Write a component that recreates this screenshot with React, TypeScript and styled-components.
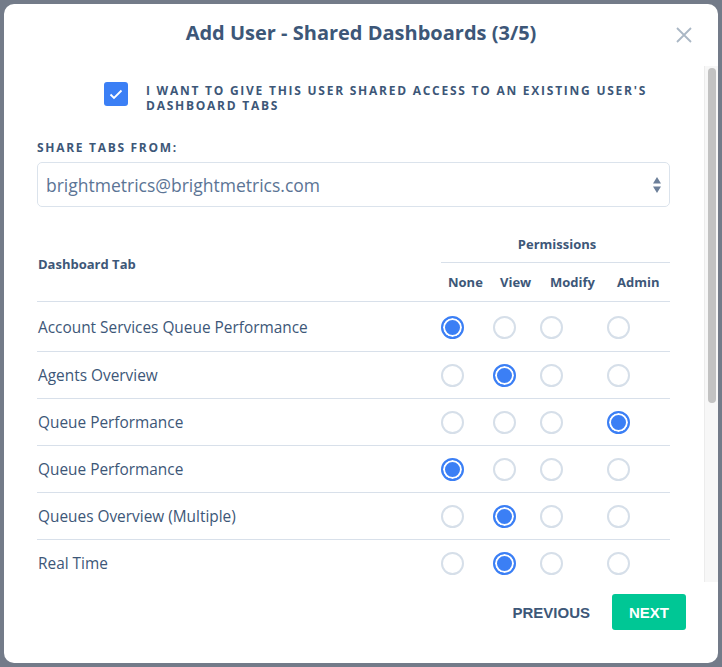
import React, { useState } from 'react';
import styled, { createGlobalStyle } from 'styled-components';

const GlobalStyle = createGlobalStyle`
    html, body {
        margin: 0;
        padding: 0;
        height: 100%;
    }
    body {
        font-family: "Open Sans", "Liberation Sans", sans-serif;
        color: #3d5778;
    }
`

const Backdrop = styled.div`
    position: fixed;
    inset: 0;
    display: flex;
    padding: 4px;
    background: #737b89;
`

const Modal = styled.div`
    flex: 1;
    display: flex;
    flex-direction: column;
    background: #ffffff;
    border-radius: 10px;
    overflow: hidden;
`

const Header = styled.div`
    height: 62px;
    flex-shrink: 0;
    display: grid;
    grid-template-columns: 1fr auto 1fr;
    align-items: center;
`

const Title = styled.h2`
    grid-column: 2;
    margin: 0;
    font-size: 20px;
    font-weight: 700;
    color: #3d5778;
    padding-bottom: 5px;
`

const CloseButton = styled.button`
    justify-self: end;
    margin-right: 26px;
    padding: 0;
    border: none;
    background: none;
    display: flex;
    cursor: pointer;
`

const Body = styled.div`
    flex: 1;
    min-height: 0;
    display: flex;
`

const ScrollContent = styled.div`
    flex: 1;
    overflow: hidden;
    padding: 0 34px 20px 33px;
`

const ScrollTrack = styled.div`
    width: 14px;
    flex-shrink: 0;
    box-sizing: border-box;
    background: #f7f7f7;
    border-left: 1px solid #ececec;
    padding: 2px 2px 0 3px;
`

const ScrollThumb = styled.div`
    height: 335px;
    border-radius: 5px;
    background: #c2c2c2;
`

const CheckRow = styled.label`
    display: flex;
    gap: 18px;
    align-items: flex-start;
    margin-top: 16px;
    padding-left: 67px;
    cursor: pointer;
`

const CheckBox = styled.span<{ $checked: boolean }>`
    flex-shrink: 0;
    width: 24px;
    height: 24px;
    border-radius: 3px;
    display: flex;
    align-items: center;
    justify-content: center;
    background: ${p => p.$checked ? '#3b7ff5' : '#ffffff'};
    border: ${p => p.$checked ? 'none' : '2px solid #d5dee8'};
    box-sizing: border-box;
`

const CapsText = styled.span`
    font-size: 12px;
    font-weight: 700;
    letter-spacing: 1.75px;
    line-height: 15px;
    text-transform: uppercase;
    color: #3d5778;
`

const CheckText = styled(CapsText)`
    width: 520px;
    padding-top: 1px;
`

const FieldLabel = styled(CapsText)`
    display: block;
    margin-top: 27px;
    letter-spacing: 1.7px;
`

const SelectBox = styled.div`
    margin-top: 7px;
    height: 45px;
    box-sizing: border-box;
    border: 1px solid #dbe3ec;
    border-radius: 5px;
    display: flex;
    align-items: center;
    justify-content: space-between;
    padding: 0 7px 0 8px;
`

const SelectValue = styled.span`
    font-size: 17.5px;
    color: #5b7495;
`

const Table = styled.div`
    margin-top: 23px;
    display: grid;
    grid-template-columns: 1fr 52px 47px 67px 63px;
`

const HeadName = styled.div`
    grid-row: span 2;
    align-self: center;
    font-size: 13px;
    font-weight: 700;
    padding: 0 0 4px 1px;
`

const HeadGroup = styled.div`
    grid-column: span 4;
    height: 33px;
    box-sizing: border-box;
    border-bottom: 1px solid #d8e0ea;
    display: flex;
    align-items: flex-end;
    justify-content: center;
    padding: 0 0 9px 3px;
    font-size: 13px;
    font-weight: 700;
`

const HeadCol = styled.div<{ $pad: number }>`
    height: 38px;
    display: flex;
    align-items: center;
    padding-left: ${p => p.$pad}px;
    font-size: 13px;
    font-weight: 700;
`

const Cell = styled.div<{ $first: boolean }>`
    height: ${p => p.$first ? 47 : 46}px;
    border-top: 1px solid #d8e0ea;
    display: flex;
    align-items: center;
    padding-top: ${p => p.$first ? 2 : 0}px;
    box-sizing: content-box;
`

const RowName = styled(Cell)`
    font-size: 15.4px;
    padding-left: 1px;
    color: #3d5778;
`

const Radio = styled.button<{ $on: boolean }>`
    width: 23px;
    height: 23px;
    padding: 0;
    border-radius: 50%;
    cursor: pointer;
    box-sizing: border-box;
    border: 2px solid ${p => p.$on ? '#3b7ff5' : '#d6dfe9'};
    background: ${p => p.$on ? '#3b7ff5' : '#ffffff'};
    box-shadow: ${p => p.$on ? 'inset 0 0 0 2px #ffffff' : 'none'};
`

const Footer = styled.div`
    height: 81px;
    flex-shrink: 0;
    box-sizing: border-box;
    display: flex;
    align-items: flex-start;
    justify-content: flex-end;
    gap: 22px;
    padding: 12px 32px 0 0;
`

const TextButton = styled.button`
    height: 36px;
    border: none;
    background: none;
    padding: 0;
    font-family: "Liberation Sans", Arial, sans-serif;
    font-size: 15px;
    font-weight: 700;
    color: #3d5778;
    cursor: pointer;
`

const PrimaryButton = styled(TextButton)`
    padding: 0 17px;
    border-radius: 3px;
    background: #00c795;
    color: #ffffff;
`

const perms = ['None', 'View', 'Modify', 'Admin'];
const headPads = [7, 7, 10, 10];

const initialRows = [
    { name: 'Account Services Queue Performance', perm: 0 },
    { name: 'Agents Overview', perm: 1 },
    { name: 'Queue Performance', perm: 3 },
    { name: 'Queue Performance', perm: 0 },
    { name: 'Queues Overview (Multiple)', perm: 1 },
    { name: 'Real Time', perm: 1 },
];

export default function App() {
    const [shared, setShared] = useState(true);
    const [rows, setRows] = useState(initialRows);

    function setPerm(index: number, perm: number) {
        setRows(rows.map((r, i) => i === index ? { ...r, perm } : r));
    }

    return (
        <>
            <GlobalStyle />
            <Backdrop>
                <Modal>
                    <Header>
                        <Title>Add User - Shared Dashboards (3/5)</Title>
                        <CloseButton aria-label="Close">
                            <svg width="16" height="16" viewBox="0 0 16 16">
                                <path d="M1 1 L15 15 M15 1 L1 15" stroke="#aab7c5" strokeWidth="1.8" fill="none" />
                            </svg>
                        </CloseButton>
                    </Header>
                    <Body>
                        <ScrollContent>
                            <CheckRow onClick={() => setShared(!shared)}>
                                <CheckBox $checked={shared}>
                                    {shared && (
                                        <svg width="14" height="11" viewBox="0 0 14 11">
                                            <path d="M1.5 5.5 L5 9 L12.5 1.5" stroke="#ffffff" strokeWidth="1.8" fill="none" />
                                        </svg>
                                    )}
                                </CheckBox>
                                <CheckText>I want to give this user shared access to an existing user's dashboard tabs</CheckText>
                            </CheckRow>
                            <FieldLabel>Share tabs from:</FieldLabel>
                            <SelectBox>
                                <SelectValue>brightmetrics@brightmetrics.com</SelectValue>
                                <svg width="10" height="18" viewBox="0 0 10 18">
                                    <path d="M5 1 L9 7.5 L1 7.5 Z M1 10.5 L9 10.5 L5 17 Z" fill="#6c7f99" />
                                </svg>
                            </SelectBox>
                            <Table>
                                <HeadName>Dashboard Tab</HeadName>
                                <HeadGroup>Permissions</HeadGroup>
                                {perms.map((p, i) => <HeadCol key={p} $pad={headPads[i]}>{p}</HeadCol>)}
                                {rows.map((row, ri) => (
                                    <React.Fragment key={ri}>
                                        <RowName $first={ri === 0}>{row.name}</RowName>
                                        {perms.map((p, pi) => (
                                            <Cell key={p} $first={ri === 0}>
                                                <Radio $on={row.perm === pi} aria-label={p} onClick={() => setPerm(ri, pi)} />
                                            </Cell>
                                        ))}
                                    </React.Fragment>
                                ))}
                            </Table>
                        </ScrollContent>
                        <ScrollTrack>
                            <ScrollThumb />
                        </ScrollTrack>
                    </Body>
                    <Footer>
                        <TextButton>PREVIOUS</TextButton>
                        <PrimaryButton>NEXT</PrimaryButton>
                    </Footer>
                </Modal>
            </Backdrop>
        </>
    );
}
